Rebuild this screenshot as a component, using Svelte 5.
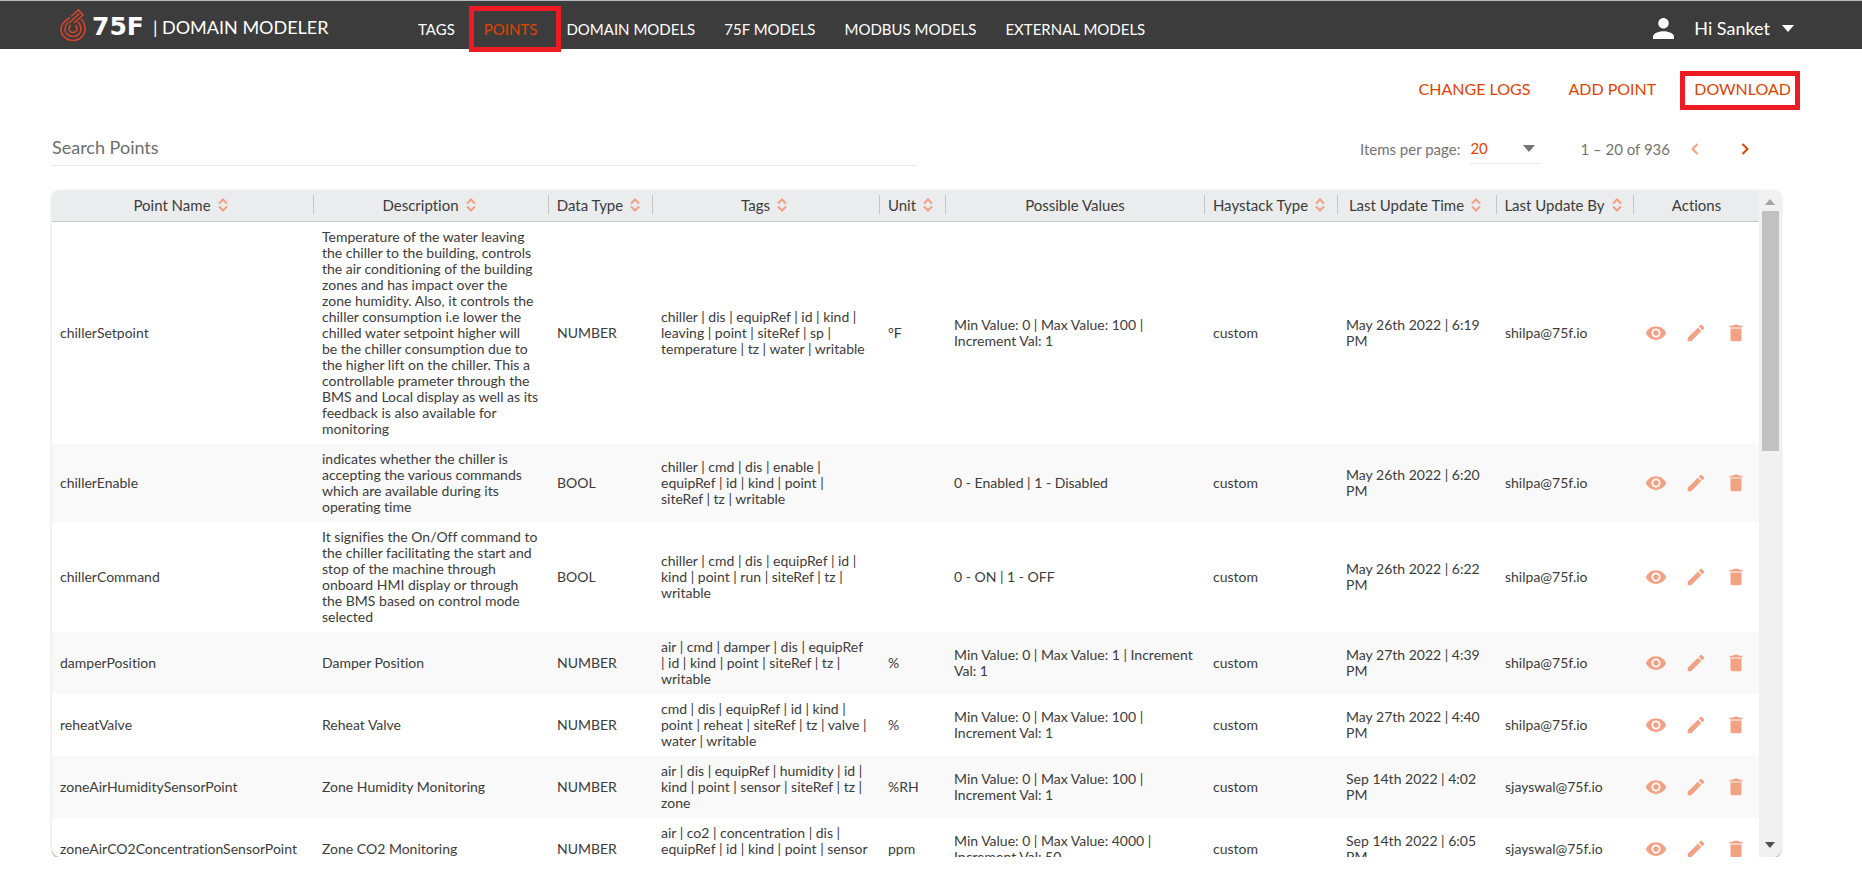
<script lang="ts">
  type Column = { label: string; width: number; sortable: boolean };

  type Point = {
    name: string;
    description: string;
    dataType: string;
    tags: string;
    unit: string;
    values: string;
    haystack: string;
    updatedAt: string;
    updatedBy: string;
  };

  const links = ["TAGS", "POINTS", "DOMAIN MODELS", "75F MODELS", "MODBUS MODELS", "EXTERNAL MODELS"];

  const columns: Column[] = [
    { label: "Point Name", width: 262, sortable: true },
    { label: "Description", width: 235, sortable: true },
    { label: "Data Type", width: 104, sortable: true },
    { label: "Tags", width: 227, sortable: true },
    { label: "Unit", width: 66, sortable: true },
    { label: "Possible Values", width: 259, sortable: false },
    { label: "Haystack Type", width: 133, sortable: true },
    { label: "Last Update Time", width: 159, sortable: true },
    { label: "Last Update By", width: 137, sortable: true },
    { label: "Actions", width: 125, sortable: false },
  ];

  const points: Point[] = [
    {
      name: "chillerSetpoint",
      description:
        "Temperature of the water leaving the chiller to the building, controls the air conditioning of the building zones and has impact over the zone humidity. Also, it controls the chiller consumption i.e lower the chilled water setpoint higher will be\u00a0the chiller consumption due to the\u00a0higher lift on the chiller. This a controllable prameter through the BMS and Local display as well as its feedback is also available for monitoring",
      dataType: "NUMBER",
      tags: "chiller | dis | equipRef | id | kind | leaving | point | siteRef | sp | temperature | tz | water | writable",
      unit: "°F",
      values: "Min Value: 0 | Max Value: 100 | Increment Val: 1",
      haystack: "custom",
      updatedAt: "May 26th 2022 | 6:19 PM",
      updatedBy: "shilpa@75f.io",
    },
    {
      name: "chillerEnable",
      description:
        "indicates whether the chiller is accepting the various commands which are available during its operating time",
      dataType: "BOOL",
      tags: "chiller | cmd | dis | enable | equipRef | id | kind | point | siteRef | tz | writable",
      unit: "",
      values: "0 - Enabled | 1 - Disabled",
      haystack: "custom",
      updatedAt: "May 26th 2022 | 6:20 PM",
      updatedBy: "shilpa@75f.io",
    },
    {
      name: "chillerCommand",
      description:
        "It signifies the On/Off command to the chiller facilitating the start and stop of the machine through onboard HMI display or through the BMS based on control mode selected",
      dataType: "BOOL",
      tags: "chiller | cmd | dis | equipRef | id | kind | point | run | siteRef | tz | writable",
      unit: "",
      values: "0 - ON | 1 - OFF",
      haystack: "custom",
      updatedAt: "May 26th 2022 | 6:22 PM",
      updatedBy: "shilpa@75f.io",
    },
    {
      name: "damperPosition",
      description: "Damper Position",
      dataType: "NUMBER",
      tags: "air | cmd | damper | dis | equipRef | id | kind | point | siteRef | tz | writable",
      unit: "%",
      values: "Min Value: 0 | Max Value: 1 | Increment Val: 1",
      haystack: "custom",
      updatedAt: "May 27th 2022 | 4:39 PM",
      updatedBy: "shilpa@75f.io",
    },
    {
      name: "reheatValve",
      description: "Reheat Valve",
      dataType: "NUMBER",
      tags: "cmd | dis | equipRef | id | kind | point | reheat | siteRef | tz | valve | water | writable",
      unit: "%",
      values: "Min Value: 0 | Max Value: 100 | Increment Val: 1",
      haystack: "custom",
      updatedAt: "May 27th 2022 | 4:40 PM",
      updatedBy: "shilpa@75f.io",
    },
    {
      name: "zoneAirHumiditySensorPoint",
      description: "Zone Humidity Monitoring",
      dataType: "NUMBER",
      tags: "air | dis | equipRef | humidity | id | kind | point | sensor | siteRef | tz | zone",
      unit: "%RH",
      values: "Min Value: 0 | Max Value: 100 | Increment Val: 1",
      haystack: "custom",
      updatedAt: "Sep 14th 2022 | 4:02 PM",
      updatedBy: "sjayswal@75f.io",
    },
    {
      name: "zoneAirCO2ConcentrationSensorPoint",
      description: "Zone CO2 Monitoring",
      dataType: "NUMBER",
      tags: "air | co2 | concentration | dis | equipRef | id | kind | point | sensor | siteRef | tz | zone",
      unit: "ppm",
      values: "Min Value: 0 | Max Value: 4000 | Increment Val: 50",
      haystack: "custom",
      updatedAt: "Sep 14th 2022 | 6:05 PM",
      updatedBy: "sjayswal@75f.io",
    },
  ];

  let active = $state("POINTS");
  let search = $state("");
  let pageSize = $state("20");

  const visible = $derived(points.filter((p) => p.name.toLowerCase().includes(search.toLowerCase())));
</script>

<header class="topbar">
  <a class="brand" href="#home">
    <svg class="drop" viewBox="0 0 26 32" aria-hidden="true">
      <path d="M11 7.500L18.500 1L23 6L14 14" />
      <path d="M9 14L19.500 4.500" />
      <path d="M10 8.500C5 12 1 15 1 20A12 11.500 0 0 0 25 20C25 15.500 23.500 12.500 21 10" />
      <path d="M8 13.500C6 15.500 5 17.500 5 20A8 7.500 0 0 0 21 20C21 17.500 20 15 18 13" />
      <path d="M10.500 16C9.500 17.500 9 18.500 9 20A4 3.500 0 0 0 17 20C17 18.500 16.500 17.500 15.500 16" />
    </svg>
    <span class="logo-text">75F</span>
    <span class="product">| DOMAIN MODELER</span>
  </a>

  <nav class="links">
    {#each links as link}
      <a
        href="#{link.toLowerCase().replace(' ', '-')}"
        class:active={active === link}
        onclick={() => (active = link)}
      >{link}</a>
    {/each}
  </nav>

  <button class="user">
    <svg class="avatar" viewBox="4 4 16 16" aria-hidden="true">
      <path d="M12 12c2.210 0 4-1.790 4-4s-1.790-4-4-4-4 1.790-4 4 1.790 4 4 4zm0 2c-2.670 0-8 1.340-8 4v2h16v-2c0-2.660-5.330-4-8-4z" />
    </svg>
    <span>Hi Sanket</span>
    <svg class="caret" viewBox="0 0 12 7" aria-hidden="true"><path d="M0 0h12L6 7z" /></svg>
  </button>
</header>

<main class="page">
  <div class="actions">
    <button>CHANGE LOGS</button>
    <button>ADD POINT</button>
    <button class="marked">DOWNLOAD</button>
  </div>

  <div class="toolbar">
    <input class="search" type="text" aria-label="Search Points" placeholder="Search Points" bind:value={search} />

    <div class="pager">
      <label for="page-size">Items per page:</label>
      <div class="select-wrap">
        <select id="page-size" bind:value={pageSize}>
          <option>20</option>
          <option>50</option>
          <option>100</option>
        </select>
        <svg class="caret" viewBox="0 0 12 7" aria-hidden="true"><path d="M0 0h12L6 7z" /></svg>
      </div>
      <span class="range">1 – 20 of 936</span>
      <button class="step" aria-label="Previous page" disabled>
        <svg viewBox="0 0 8 12"><path d="M6.500 1L1.500 6l5 5" /></svg>
      </button>
      <button class="step" aria-label="Next page">
        <svg viewBox="0 0 8 12"><path d="M1.500 1l5 5-5 5" /></svg>
      </button>
    </div>
  </div>

  <section class="card">
    <div class="scroller">
      <table>
        <colgroup>
          {#each columns as col}
            <col style="width: {col.width}px" />
          {/each}
        </colgroup>
        <thead>
          <tr>
            {#each columns as col}
              <th>
                <div class="head" class:sortable={col.sortable}>
                  <span>{col.label}</span>
                  {#if col.sortable}
                    <button class="sort" aria-label="Sort by {col.label}">
                      <svg viewBox="0 0 10 14"><path d="M1 5.500L5 1.500l4 4M1 8.500l4 4 4-4" /></svg>
                    </button>
                  {/if}
                </div>
              </th>
            {/each}
          </tr>
        </thead>
        <tbody>
          {#each visible as point (point.name)}
            <tr>
              <td>{point.name}</td>
              <td class="description">{point.description}</td>
              <td>{point.dataType}</td>
              <td class="tags">{point.tags}</td>
              <td>{point.unit}</td>
              <td>{point.values}</td>
              <td>{point.haystack}</td>
              <td>{point.updatedAt}</td>
              <td>{point.updatedBy}</td>
              <td class="row-end">
                <div class="row-actions">
                  <button aria-label="View {point.name}">
                    <svg viewBox="0 0 24 24"><path d="M12 4.500C7 4.500 2.730 7.610 1 12c1.730 4.390 6 7.500 11 7.500s9.270-3.110 11-7.500c-1.730-4.390-6-7.500-11-7.500zM12 17c-2.760 0-5-2.240-5-5s2.240-5 5-5 5 2.240 5 5-2.240 5-5 5zm0-8c-1.660 0-3 1.340-3 3s1.340 3 3 3 3-1.340 3-3-1.340-3-3-3z" /></svg>
                  </button>
                  <button aria-label="Edit {point.name}">
                    <svg viewBox="0 0 24 24"><path d="M3 17.250V21h3.750L17.810 9.940l-3.750-3.750L3 17.250zM20.710 7.040c.39-.39.39-1.020 0-1.410l-2.340-2.340c-.39-.39-1.020-.39-1.410 0l-1.830 1.830 3.750 3.750 1.830-1.830z" /></svg>
                  </button>
                  <button aria-label="Delete {point.name}">
                    <svg viewBox="0 0 24 24"><path d="M6 19c0 1.100.9 2 2 2h8c1.100 0 2-.9 2-2V7H6v12zM19 4h-3.500l-1-1h-5l-1 1H5v2h14V4z" /></svg>
                  </button>
                </div>
              </td>
            </tr>
          {/each}
        </tbody>
      </table>
    </div>
    <div class="scrollbar" aria-hidden="true">
      <svg class="arrow up" viewBox="0 0 10 6"><path d="M0 6h10L5 0z" /></svg>
      <div class="thumb"></div>
      <svg class="arrow down" viewBox="0 0 10 6"><path d="M0 0h10L5 6z" /></svg>
    </div>
  </section>
</main>

<style>
  :global(body) {
    margin: 0;
    background: #fff;
    font-family: Lato, "Liberation Sans", sans-serif;
    font-variant-ligatures: none;
    color: #3c3c3c;
  }

  button {
    padding: 0;
    border: none;
    background: none;
    font: inherit;
    color: inherit;
    cursor: pointer;
  }

  svg {
    display: block;
  }

  .topbar {
    box-sizing: border-box;
    display: flex;
    align-items: center;
    height: 49px;
    padding: 0 68px 0 60px;
    border-top: 1px solid #b8bcba;
    background: #3c3c3c;
    color: #fff;
  }

  .brand {
    display: flex;
    align-items: center;
    width: 358px;
    color: #fff;
    text-decoration: none;
  }

  .drop {
    width: 26px;
    height: 32px;
    fill: none;
    stroke: #d8452a;
    stroke-width: 1.6;
  }

  .logo-text {
    margin-left: 6px;
    padding-top: 4px;
    font: bold 25px/28px "DejaVu Sans", sans-serif;
  }

  .product {
    margin-left: 9px;
    padding-top: 4px;
    font-size: 18px;
    line-height: 24px;
    white-space: nowrap;
  }

  .links {
    display: flex;
    gap: 29px;
    margin-top: 8px;
  }

  .links a {
    position: relative;
    font-size: 15px;
    line-height: 20px;
    color: #fff;
    text-decoration: none;
    white-space: nowrap;
  }

  .links a.active {
    color: #e24301;
  }

  /* red callout frames */
  .links a.active::after,
  .marked::after {
    content: "";
    position: absolute;
    inset: -13px -24px -13px -15px;
    border: 5px solid #ee1b24;
    pointer-events: none;
  }

  .user {
    display: flex;
    align-items: center;
    margin-left: auto;
    margin-top: 6px;
    font-size: 18px;
    line-height: 24px;
  }

  .avatar {
    width: 21px;
    height: 21px;
    margin-right: 20px;
    fill: currentColor;
  }

  .caret {
    width: 12px;
    height: 7px;
    fill: currentColor;
  }

  .user .caret {
    margin-left: 12px;
  }

  .page {
    padding: 0 81px 0 52px;
  }

  .actions {
    display: flex;
    justify-content: flex-end;
    gap: 38px;
    padding: 30px 0 0;
    margin-right: -10px;
    font-size: 16px;
    line-height: 20px;
    color: #e24301;
  }

  .marked {
    position: relative;
  }

  .marked::after {
    inset: -8px -9px -11px -14px;
  }

  .toolbar {
    display: flex;
    align-items: flex-end;
    justify-content: space-between;
    height: 67px;
    margin-bottom: 24px;
  }

  .search {
    box-sizing: border-box;
    width: 50%;
    height: 34px;
    padding: 0 0 4px;
    border: none;
    border-bottom: 1px solid #e8e8e8;
    outline: none;
    font: 18px/24px Lato, sans-serif;
    color: #3c3c3c;
  }

  .search::placeholder {
    color: #6e6e6e;
    opacity: 1;
  }

  .pager {
    display: flex;
    align-items: center;
    margin-right: 32px;
    padding-bottom: 2px;
    font-size: 15px;
    line-height: 24px;
    color: #757575;
  }

  .select-wrap {
    display: flex;
    align-items: center;
    width: 70px;
    height: 30px;
    margin: 0 40px 0 10px;
    border-bottom: 1px solid #e8e8e8;
  }

  .select-wrap select {
    flex: 1;
    padding: 0;
    border: none;
    outline: none;
    appearance: none;
    background: none;
    font: inherit;
    color: #e24301;
  }

  .select-wrap .caret {
    margin-right: 5px;
  }

  .range {
    margin-right: 21px;
  }

  .step {
    margin-left: 42px;
  }

  .range + .step {
    margin-left: 0;
  }

  .step svg {
    width: 8px;
    height: 12px;
    fill: none;
    stroke: #e24301;
    stroke-width: 2;
  }

  .step:disabled {
    opacity: 0.5;
  }

  .card {
    display: flex;
    height: calc(100vh - 216px);
    min-height: 240px;
    overflow: hidden;
    border-radius: 8px;
    background: #fff;
    box-shadow:
      0 1px 0 #a8aaaa,
      0 1px 3px rgba(0, 0, 0, 0.2);
  }

  .scroller {
    flex: 1;
    min-width: 0;
    overflow: auto;
    scrollbar-width: none;
  }

  table {
    width: 100%;
    table-layout: fixed;
    border-collapse: separate;
    border-spacing: 0;
  }

  th {
    position: sticky;
    top: 0;
    height: 29px;
    padding: 0 0 2px;
    border-bottom: 1px solid #c6c8ca;
    background: #ebecee;
    font-size: 15px;
    font-weight: 400;
    line-height: 18px;
  }

  .head {
    display: flex;
    align-items: center;
    justify-content: center;
    gap: 7px;
    height: 19px;
    border-right: 1px solid #c2c4c6;
    white-space: nowrap;
  }

  .head.sortable {
    padding-right: 4px;
  }

  th:last-child .head {
    border-right: none;
  }

  .sort svg {
    width: 10px;
    height: 14px;
    fill: none;
    stroke: #f0a083;
    stroke-width: 2;
  }

  td {
    padding: 7px 6px 7px 8px;
    font-size: 14px;
    line-height: 16px;
    vertical-align: middle;
  }

  .description {
    padding-right: 9px;
  }

  .tags {
    padding-right: 12px;
  }

  .row-end {
    padding-right: 9px;
  }

  tbody tr:nth-child(even) {
    background: #f9f9f9;
  }

  .row-actions {
    display: flex;
    justify-content: center;
    gap: 18px;
  }

  .row-actions svg {
    width: 22px;
    height: 22px;
    fill: #f2a183;
  }

  .scrollbar {
    display: flex;
    flex-direction: column;
    align-items: center;
    width: 22px;
    background: #f1f1f1;
  }

  .arrow {
    width: 10px;
    height: 6px;
  }

  .up {
    margin: 9px 0 6px;
    fill: #a3a3a3;
  }

  .down {
    margin: auto 0 9px;
    fill: #505050;
  }

  .thumb {
    width: 17px;
    height: 36%;
    background: #c1c1c1;
  }
</style>
